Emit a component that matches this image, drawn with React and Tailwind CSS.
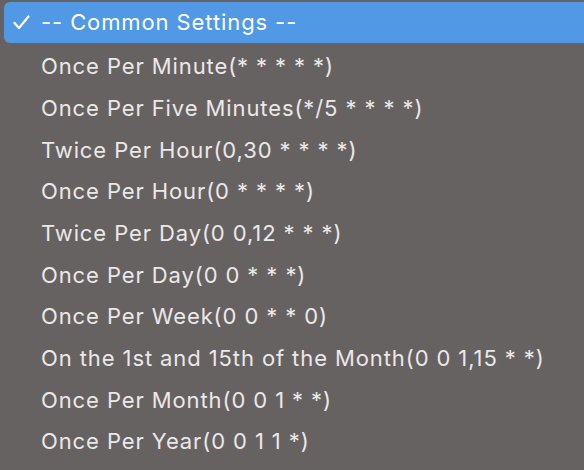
import React from 'react';

const items = [
  'Once Per Minute(* * * * *)',
  'Once Per Five Minutes(*/5 * * * *)',
  'Twice Per Hour(0,30 * * * *)',
  'Once Per Hour(0 * * * *)',
  'Twice Per Day(0 0,12 * * *)',
  'Once Per Day(0 0 * * *)',
  'Once Per Week(0 0 * * 0)',
  'On the 1st and 15th of the Month(0 0 1,15 * *)',
  'Once Per Month(0 0 1 * *)',
  'Once Per Year(0 0 1 1 *)',
];

const App = () => {
  return (
    <div
      className="w-[584px] h-[470px] overflow-hidden bg-[#676262] text-[#ebe8e8] text-[22px] tracking-[0.9px]"
      style={{ fontFamily: 'Inter, "Liberation Sans", sans-serif' }}
    >
      <div className="mt-[2px] ml-[4px] h-[41px] flex items-center bg-[#5199e4] rounded-l-[6px] text-white">
        <svg width="17" height="15" viewBox="0 0 17 15" className="ml-[9px] mr-[11px]">
          <path d="M1.5 8 L6 13 L15.5 1.5" fill="none" stroke="white" strokeWidth="2.2" strokeLinecap="round" strokeLinejoin="round" />
        </svg>
        <span>-- Common Settings --</span>
      </div>
      <div className="mt-[3px]">
        {items.map((label) => (
          <div key={label} className="h-[41.67px] flex items-center pl-[41px]">
            {label}
          </div>
        ))}
      </div>
    </div>
  );
};

export default App;
